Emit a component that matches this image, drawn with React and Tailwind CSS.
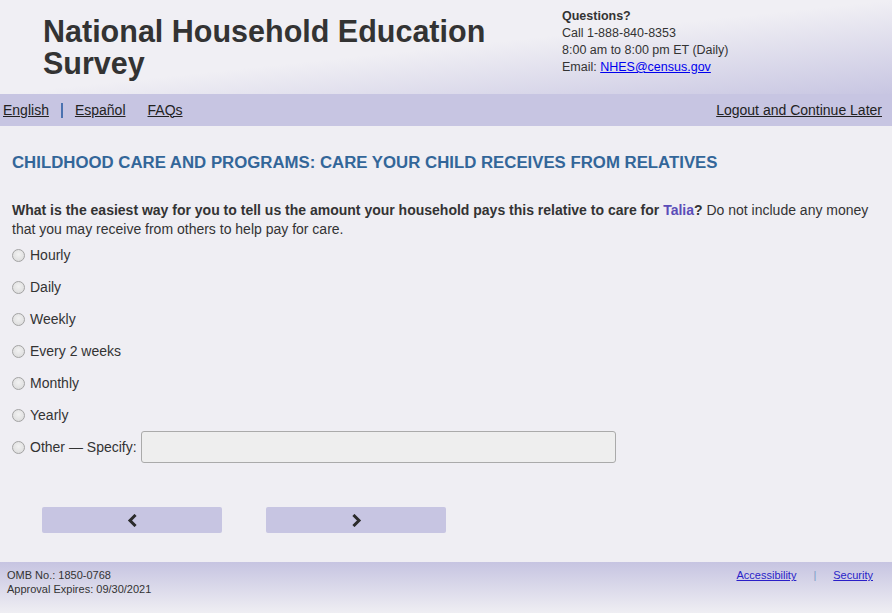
const options = ['Hourly', 'Daily', 'Weekly', 'Every 2 weeks', 'Monthly', 'Yearly'];

function Radio() {
  return (
    <span className="inline-block w-[13px] h-[13px] rounded-full border border-[#a3a3a3] bg-[radial-gradient(circle_at_50%_40%,#f2f2f2,#d8d8d8)] shrink-0" />
  );
}

function Chevron({ dir }) {
  return (
    <svg width="11" height="13" viewBox="0 0 11 13" fill="none" stroke="#2b2b2b" strokeWidth="3" strokeLinecap="square">
      {dir === 'left' ? <polyline points="7.5,2 3,6.5 7.5,11" /> : <polyline points="3.5,2 8,6.5 3.5,11" />}
    </svg>
  );
}

export default function App() {
  return (
    <div className="min-h-screen flex flex-col bg-[#efeef3] text-[#333] font-['Liberation_Sans',Arial,sans-serif]">
      {/* Header */}
      <header className="h-[94px] flex bg-[linear-gradient(to_bottom_right,#f0eff4_50%,#c8c6e2_100%)]">
        <div className="w-[562px] shrink-0 pl-[43px] pr-[40px] pt-[15px]">
          <h1 className="text-[30.5px] leading-[32px] font-bold text-[#333]">
            National Household Education Survey
          </h1>
        </div>
        <div className="pt-[8px] text-[12.5px] leading-[17px] text-[#333]">
          <div className="font-bold">Questions?</div>
          <div>Call 1-888-840-8353</div>
          <div>8:00 am to 8:00 pm ET (Daily)</div>
          <div>
            Email: <a href="#" className="text-[#0000ee] underline">NHES@census.gov</a>
          </div>
        </div>
      </header>

      {/* Nav bar */}
      <nav className="h-[32px] bg-[#c7c5e2] flex items-center justify-between pl-[3px] pr-[10px] text-[14px] text-[#222]">
        <div className="flex items-center">
          <a href="#" className="underline">English</a>
          <span className="mx-[12px] w-[2px] h-[15px] bg-[#4a72b0]" />
          <a href="#" className="underline">Español</a>
          <a href="#" className="underline ml-[22px]">FAQs</a>
        </div>
        <a href="#" className="underline">Logout and Continue Later</a>
      </nav>

      {/* Main */}
      <main className="px-[12px] pt-[24px]">
        <h2 className="text-[16.8px] font-bold text-[#336699]">
          CHILDHOOD CARE AND PROGRAMS: CARE YOUR CHILD RECEIVES FROM RELATIVES
        </h2>

        <p className="mt-[26px] text-[14px] leading-[19px]">
          <span className="font-bold">
            What is the easiest way for you to tell us the amount your household pays this relative to care for{' '}
            <span className="text-[#5b4db8]">Talia</span>?
          </span>{' '}
          Do not include any money that you may receive from others to help pay for care.
        </p>

        <div className="text-[14px]">
          {options.map((o) => (
            <label key={o} className="h-[32px] flex items-center gap-[5px]">
              <Radio />
              <span>{o}</span>
            </label>
          ))}
          <label className="h-[32px] flex items-center gap-[5px]">
            <Radio />
            <span>Other — Specify:</span>
            <input
              type="text"
              className="ml-[-1px] w-[475px] h-[32px] bg-[#eeeeee] border border-[#aaaaaa] rounded-[3px]"
            />
          </label>
        </div>

        <div className="mt-[44px] ml-[30px] flex gap-[44px]">
          <button className="w-[180px] h-[26px] bg-[#c7c5e2] rounded-[2px] flex items-center justify-center">
            <Chevron dir="left" />
          </button>
          <button className="w-[180px] h-[26px] bg-[#c7c5e2] rounded-[2px] flex items-center justify-center">
            <Chevron dir="right" />
          </button>
        </div>
      </main>

      {/* Footer */}
      <footer className="mt-auto h-[51px] bg-[linear-gradient(to_bottom,#c6c4e1,#efeef3)] flex justify-between pl-[7px] pr-[19px] pt-[6px] text-[11px] leading-[14px] text-[#333]">
        <div>
          <div>OMB No.: 1850-0768</div>
          <div>Approval Expires: 09/30/2021</div>
        </div>
        <div className="flex gap-[17px] items-start">
          <a href="#" className="underline text-[#2a1fc8]">Accessibility</a>
          <span className="text-[#7a9cc6]">|</span>
          <a href="#" className="underline text-[#2a1fc8]">Security</a>
        </div>
      </footer>
    </div>
  );
}
